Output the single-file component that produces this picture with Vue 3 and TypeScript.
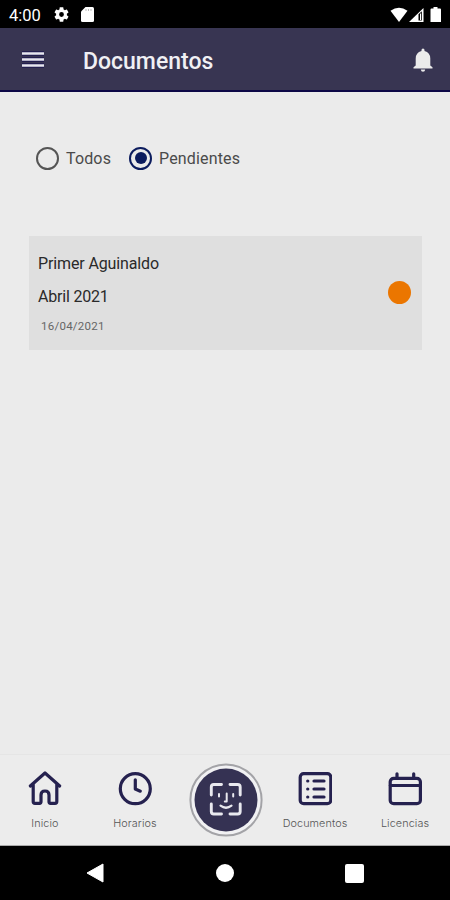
<script setup lang="ts">
import { ref } from 'vue'

type Filter = 'todos' | 'pendientes'

interface DocumentItem {
  title: string
  period: string
  date: string
  pending: boolean
}

const filter = ref<Filter>('pendientes')
const filters: { id: Filter; label: string }[] = [
  { id: 'todos', label: 'Todos' },
  { id: 'pendientes', label: 'Pendientes' },
]
const documents: DocumentItem[] = [
  { title: 'Primer Aguinaldo', period: 'Abril 2021', date: '16/04/2021', pending: true },
]
</script>

<template>
  <div class="screen">
    <div class="status">
      <span class="time">4:00</span>
      <svg class="gear" viewBox="2 2 20 20" width="15" height="15"><path fill="#fff" d="M19.14 12.94c.04-.3.06-.61.06-.94 0-.32-.02-.64-.07-.94l2.03-1.58c.18-.14.23-.41.12-.61l-1.92-3.32c-.12-.22-.37-.29-.59-.22l-2.39.96c-.5-.38-1.03-.7-1.62-.94l-.36-2.54c-.04-.24-.24-.41-.48-.41h-3.84c-.24 0-.43.17-.47.41l-.36 2.54c-.59.24-1.13.57-1.62.94l-2.39-.96c-.22-.08-.47 0-.59.22L2.74 8.87c-.12.21-.08.47.12.61l2.03 1.58c-.05.3-.09.63-.09.94s.02.64.07.94l-2.03 1.58c-.18.14-.23.41-.12.61l1.92 3.32c.12.22.37.29.59.22l2.39-.96c.5.38 1.03.7 1.62.94l.36 2.54c.05.24.24.41.48.41h3.84c.24 0 .44-.17.47-.41l.36-2.54c.59-.24 1.13-.56 1.62-.94l2.39.96c.22.08.47 0 .59-.22l1.92-3.32c.12-.22.07-.47-.12-.61l-2.01-1.58zM12 15.2A3.2 3.2 0 1 1 12 8.800a3.200 3.200 0 0 1 0 6.400z" /></svg>
      <svg class="card-icon" viewBox="0 0 13 15" width="13" height="15"><path fill="#fff" d="M4.500 0H11.500Q13 0 13 1.500V13.500Q13 15 11.500 15H1.500Q0 15 0 13.500V4.500z" /><path stroke="#bbb" stroke-width="1" d="M5 2v2M7.500 2v2M10 2v2" /></svg>
      <svg class="signals" viewBox="0 0 52 16" width="52" height="16">
        <path fill="#fff" d="M0.500 3.700Q9 -2.400 17.500 3.700L9 15z" />
        <path fill="#fff" d="M19 15L33.500 1V15z" />
        <path fill="#000" d="M28.500 7.200L31.800 4.200V13.500H28.500z" />
        <path fill="#fff" d="M30 6.500h1v6.500h-1z" />
        <path fill="#fff" d="M43.500 0h4v1.500H50q1 0 1 1V15H40.500V2.500q0-1 1-1h2z" />
      </svg>
    </div>

    <header class="header">
      <svg class="menu" viewBox="0 0 22 18" width="22" height="18"><path stroke="#0b0750" stroke-width="4.400" d="M0 2.500h22M0 8.500h22M0 14.500h22" opacity=".6" /><path stroke="#e6e6ee" stroke-width="2.700" d="M0 2.500h22M0 8.500h22M0 14.500h22" /></svg>
      <h1>Documentos</h1>
      <svg class="bell" viewBox="0 0 20 24" width="20" height="24"><path fill="#ebebeb" d="M10 .5Q11.500 .5 11.500 2V3Q17.300 4.600 17.300 10.500V17.500L19.500 19.300V20.500H.5V19.300L2.700 17.500V10.500Q2.700 4.600 8.500 3V2Q8.500 .5 10 .5zM7.800 21.500h4.400Q12 23.700 10 23.700T7.800 21.500z" /></svg>
    </header>

    <main class="content">
      <div class="filters" role="radiogroup">
        <button
          v-for="option in filters"
          :key="option.id"
          :class="['radio', { checked: filter === option.id }]"
          role="radio"
          :aria-checked="filter === option.id"
          @click="filter = option.id"
        >
          <span class="ring"></span>
          <span class="radio-label">{{ option.label }}</span>
        </button>
      </div>

      <article v-for="doc in documents" :key="doc.title" class="doc">
        <div class="doc-text">
          <div class="doc-title">{{ doc.title }}</div>
          <div class="doc-period">{{ doc.period }}</div>
          <div class="doc-date">{{ doc.date }}</div>
        </div>
        <span v-if="doc.pending" class="dot"></span>
      </article>
    </main>

    <nav class="tabs">
      <div class="tab">
        <svg viewBox="0 0 34 36" width="34" height="36"><path class="line" d="M2.300 16L17 3L31.700 16M5.200 14V31.500Q5.200 33.300 7 33.300H11.500Q13 33.300 13 31.800V25Q13 21 17 21T21 25V31.800Q21 33.300 22.500 33.300H27Q28.800 33.300 28.800 31.500V14" /></svg>
        <span>Inicio</span>
      </div>
      <div class="tab">
        <svg viewBox="0 0 34 36" width="34" height="36"><circle class="line" cx="17.300" cy="18.700" r="15" /><path class="line" d="M17.300 9.800V19l5 2.200" /></svg>
        <span>Horarios</span>
      </div>
      <div class="fab">
        <svg viewBox="0 0 74 74" width="74" height="74">
          <circle cx="37" cy="37" r="35.600" fill="#f1f1f3" stroke="#a3a3a7" stroke-width="2" />
          <circle cx="37" cy="37" r="31.500" fill="#353253" />
          <g fill="none" stroke="#e9e9ef" stroke-width="2.900" stroke-linecap="round" stroke-linejoin="round">
            <path d="M22.300 32V24Q22.300 21.500 24.800 21.500H32.500M41 21.500H48.700Q51.200 21.500 51.200 24V32M51.200 41V48.500Q51.200 51 48.700 51H41M32.500 51H24.800Q22.300 51 22.300 48.500V41" />
            <path stroke-width="2" d="M30 31V33.500M44.200 31V33.500M37.700 30.500V38.500H35.800" />
            <path stroke-width="2.200" d="M31.500 42.700Q37 46.800 42.500 42.700" />
          </g>
        </svg>
      </div>
      <div class="tab">
        <svg viewBox="0 0 34 36" width="34" height="36"><rect class="line" x="2.200" y="3.700" width="30.600" height="30" rx="3.500" /><path class="line" d="M16 11H26M16 19H26M16 27H26" /><path class="line" d="M9.700 11h.1M9.700 19h.1M9.700 27h.1" /></svg>
        <span>Documentos</span>
      </div>
      <div class="tab">
        <svg viewBox="0 0 34 36" width="34" height="36"><rect class="line" x="2.200" y="8.300" width="30.200" height="25.400" rx="3.500" /><path class="line" d="M2.300 15.500H32.300M9 3.800V8M25.700 3.800V8" /></svg>
        <span>Licencias</span>
      </div>
    </nav>

    <div class="system">
      <svg viewBox="0 0 18 20" width="18" height="20"><path fill="#fff" d="M17 1V19L1 10z" stroke="#fff" stroke-linejoin="round" /></svg>
      <span class="home"></span>
      <span class="recent"></span>
    </div>
  </div>
</template>

<style>
body {
  background: #ebebeb;
}
</style>

<style scoped>
.screen {
  display: flex;
  flex-direction: column;
  width: 450px;
  height: 900px;
  background: #ebebeb;
  font-family: Roboto, sans-serif;
  overflow: hidden;
}
svg {
  display: block;
  flex: none;
}
.status {
  display: flex;
  align-items: center;
  flex: none;
  height: 28px;
  box-sizing: border-box;
  padding: 1px 8px 0 9px;
  background: #000;
  color: #fff;
}
.time {
  width: 45px;
  padding-top: 2px;
  font-size: 16.500px;
  line-height: 20px;
}
.card-icon {
  margin-left: 12px;
}
.signals {
  margin-left: auto;
}
.header {
  display: flex;
  align-items: center;
  flex: none;
  height: 64px;
  box-sizing: border-box;
  padding: 1px 17px 0 22px;
  background: #383552;
  border-bottom: 2px solid #0d0847;
}
h1 {
  margin: 5px 0 0 39px;
  color: #f0f0f4;
  font-size: 23px;
  line-height: 28px;
  font-weight: 500;
}
.bell {
  margin-left: auto;
}
.content {
  flex: 1;
  padding: 52px 28px 0 29px;
}
.filters {
  display: flex;
  align-items: center;
  height: 28px;
  padding-left: 7px;
}
.radio {
  display: flex;
  align-items: center;
  padding: 0;
  margin-right: 18px;
  border: 0;
  background: none;
  font: inherit;
}
.ring {
  display: grid;
  place-items: center;
  width: 23px;
  height: 23px;
  box-sizing: border-box;
  border: 2px solid #555;
  border-radius: 50%;
}
.checked .ring {
  border-color: #0c1c5e;
}
.checked .ring::after {
  content: '';
  width: 12px;
  height: 12px;
  border-radius: 50%;
  background: #0c1c5e;
}
.radio-label {
  margin: 2px 0 0 7px;
  color: #4a4a4a;
  font-size: 16px;
  line-height: 20px;
  letter-spacing: 0.150px;
}
.doc {
  display: flex;
  align-items: center;
  justify-content: space-between;
  height: 114px;
  box-sizing: border-box;
  margin-top: 64px;
  padding: 0 11px 0 9px;
  background: #dfdfdf;
}
.doc-title,
.doc-period {
  height: 33px;
  color: #2a2a2a;
  font-size: 16px;
  line-height: 20px;
  letter-spacing: -0.130px;
}
.doc-period {
  height: 32px;
  letter-spacing: -0.200px;
}
.doc-date {
  padding-left: 3px;
  color: #666;
  font-size: 11.500px;
  line-height: 14px;
  letter-spacing: 0.250px;
}
.dot {
  width: 23px;
  height: 23px;
  margin-bottom: 1px;
  border-radius: 50%;
  background: #eb7600;
}
.tabs {
  display: grid;
  grid-template-columns: repeat(5, 90px);
  flex: none;
  height: 92px;
  box-sizing: border-box;
  border-top: 1px solid #e5e5e5;
  border-bottom: 1px solid #aaa;
  background: #ececec;
}
.tab {
  display: flex;
  flex-direction: column;
  align-items: center;
  padding-top: 15px;
}
.tab span {
  margin-top: 11px;
  color: #555;
  font-family: Inter, sans-serif;
  font-size: 10.800px;
  line-height: 14px;
  font-weight: 300;
  letter-spacing: 0.100px;
}
.line {
  fill: none;
  stroke: #25214f;
  stroke-width: 3.200;
  stroke-linecap: round;
  stroke-linejoin: round;
}
.fab {
  display: flex;
  justify-content: center;
  padding: 8px 0 0 2px;
}
.system {
  display: flex;
  align-items: center;
  justify-content: space-between;
  flex: none;
  height: 54px;
  box-sizing: border-box;
  padding: 0 86px;
  background: #000;
}
.home {
  width: 18px;
  height: 18px;
  border-radius: 50%;
  background: #fff;
}
.recent {
  width: 19px;
  height: 19px;
  border-radius: 2px;
  background: #fff;
}
</style>
